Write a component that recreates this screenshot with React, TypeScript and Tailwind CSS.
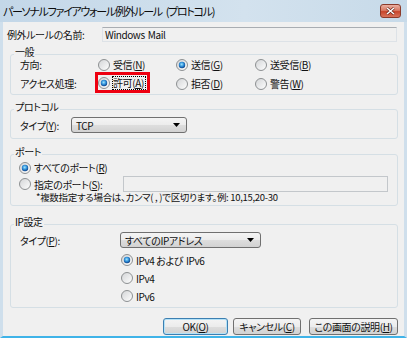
import { FC, ReactNode } from "react";

// Vista-style "Personal firewall exception rule" dialog

const Radio: FC<{ checked?: boolean }> = ({ checked }) => (
  <svg width="12" height="12" viewBox="0 0 12 12" className="shrink-0">
    <defs>
      <linearGradient id="rbg" x1="0" y1="0" x2="1" y2="1">
        <stop offset="0" stopColor="#d2d4d6" />
        <stop offset="1" stopColor="#ffffff" />
      </linearGradient>
      <radialGradient id="rdot" cx="0.45" cy="0.4" r="0.6">
        <stop offset="0" stopColor="#9fe6ff" />
        <stop offset="0.55" stopColor="#2f8fd8" />
        <stop offset="1" stopColor="#0b3f86" />
      </radialGradient>
    </defs>
    <circle cx="6" cy="6" r="5.5" fill="url(#rbg)" stroke="#8d9092" />
    {checked && <circle cx="6" cy="6" r="3.2" fill="url(#rdot)" />}
  </svg>
);

const Opt: FC<{ checked?: boolean; children: ReactNode; className?: string }> = ({
  checked,
  children,
  className = "",
}) => (
  <div className={`flex items-center gap-[3px] whitespace-nowrap ${className}`}>
    <Radio checked={checked} />
    <span>{children}</span>
  </div>
);

const Select: FC<{ value: string; className: string }> = ({ value, className }) => (
  <div
    className={`flex h-[16px] items-center justify-between rounded-[3px] border border-[#707070] bg-[linear-gradient(#f4f4f4,#ececec_50%,#dedede_50%,#d2d2d2)] pl-[4px] pr-[6px] ${className}`}
  >
    <span>{value}</span>
    <svg width="7" height="4" viewBox="0 0 7 4">
      <path d="M0 0h7L3.5 4z" fill="#000" />
    </svg>
  </div>
);

const Group: FC<{ label: string; className: string; children: ReactNode }> = ({
  label,
  className,
  children,
}) => (
  <div className={`relative ml-[7px] mr-[6px] rounded-[3px] border border-[#d5dfe5] ${className}`}>
    <span className="absolute -top-[8px] left-[3px] bg-[#f0f0f0] px-[1px] leading-[10px]">{label}</span>
    {children}
  </div>
);

const Btn: FC<{ children: ReactNode; className: string }> = ({ children, className }) => (
  <div
    className={`flex h-[17px] items-center justify-center whitespace-nowrap rounded-[3px] border bg-[linear-gradient(#f4f4f4,#ececec_50%,#dedede_50%,#d2d2d2)] ${className}`}
  >
    {children}
  </div>
);

export default function App() {
  return (
    <div className="flex h-[338px] w-[407px] flex-col overflow-hidden bg-[#f0f0f0] text-[10px] leading-[13px] tracking-[-0.4px] text-[#111] font-['Noto_Sans_CJK_JP',sans-serif] [font-feature-settings:'palt']">
      {/* Title bar */}
      <div className="flex h-[22px] shrink-0 items-center justify-between bg-[linear-gradient(90deg,#c3d7e8,#d3e2ee_60%,#c7dae9)] pl-[3px] pr-[6px]">
        <span className="text-[11px] tracking-[-1.3px] text-[#0b0b0b]">
          パーソナルファイアウォール例外ルール<span className="ml-[4px]">(プロトコル)</span>
        </span>
        <div className="flex h-[14px] w-[21px] items-center justify-center rounded-[3px] border border-[#8b3a2a] bg-[linear-gradient(#eab0a2,#d97a64_45%,#c8452b_55%,#d8745c)]">
          <svg width="9" height="8" viewBox="0 0 9 8">
            <path d="M1 1l7 6M8 1L1 7" stroke="#5a1a10" strokeWidth="2.6" />
            <path d="M1 1l7 6M8 1L1 7" stroke="#fff" strokeWidth="1.6" />
          </svg>
        </div>
      </div>

      {/* Body */}
      <div className="flex flex-1 flex-col border-x-[3px] border-b-[2px] border-x-[#cfdfec] border-b-[#3fb3e8]">
        <div className="mt-[5px] flex h-[15px] items-center pl-[4px]">
          <span className="w-[95px]">例外ルールの名前:</span>
          <div className="flex h-[15px] w-[295px] items-center border border-[#dde2e7] border-t-[#a9adb2] pl-[2px]">
            Windows<span className="ml-[3px]">Mail</span>
          </div>
        </div>

        <Group label="一般" className="mt-[12px] pb-[1px]">
          <div className="flex h-[19px] items-center pl-[9px]">
            <span className="w-[78px]">方向:</span>
            <Opt className="w-[78px]">
              受信(<u>N</u>)
            </Opt>
            <Opt checked className="w-[79px]">
              送信(<u>G</u>)
            </Opt>
            <Opt>
              送受信(<u>B</u>)
            </Opt>
          </div>
          <div className="flex h-[19px] items-center pl-[9px]">
            <span className="w-[78px]">アクセス処理:</span>
            <div className="w-[78px]">
              <div className="relative inline-flex items-center gap-[2px] whitespace-nowrap">
                <Radio checked />
                <span className="border border-dotted border-black pr-[1px] leading-[12px]">
                  許可(<u>A</u>)
                </span>
                <div className="absolute -bottom-[3px] -left-[3px] -right-[4px] -top-[4px] border-[3px] border-[#ee0010]" />
              </div>
            </div>
            <Opt className="w-[79px]">
              拒否(<u>D</u>)
            </Opt>
            <Opt>
              警告(<u>W</u>)
            </Opt>
          </div>
        </Group>

        <Group label="プロトコル" className="mt-[14px] pb-[2px] pt-[4px]">
          <div className="flex h-[22px] items-center pl-[9px]">
            <span className="w-[51px]">
              タイプ(<u>Y</u>):
            </span>
            <Select value="TCP" className="w-[116px]" />
          </div>
        </Group>

        <Group label="ポート" className="mt-[15px] pb-[2px] pt-[4px]">
          <div className="flex h-[17px] items-center pl-[8px]">
            <Opt checked>
              すべてのポート(<u>R</u>)
            </Opt>
          </div>
          <div className="flex h-[16px] items-center pl-[8px]">
            <Opt className="w-[104px]">
              指定のポート(<u>S</u>):
            </Opt>
            <div className="h-[16px] w-[265px] border border-[#c3c7cb] bg-[#f0f0f0]" />
          </div>
          <div className="flex h-[11px] items-center whitespace-nowrap pl-[25px] text-[9.5px] leading-[11px] tracking-[-0.3px]">
            *複数指定する場合は、カンマ( , )で区切ります。例: 10,15,20-30
          </div>
        </Group>

        <Group label="IP設定" className="mt-[18px] pb-[2px] pt-[7px]">
          <div className="flex h-[16px] items-center pl-[9px]">
            <span className="w-[100px]">
              タイプ(<u>P</u>):
            </span>
            <Select value="すべてのIPアドレス" className="w-[141px]" />
          </div>
          <div className="mt-[3px] flex flex-col pl-[110px]">
            <Opt checked className="h-[18px]">
              IPv4 および<span className="ml-[3px]">IPv6</span>
            </Opt>
            <Opt className="h-[18px]">IPv4</Opt>
            <Opt className="h-[18px]">IPv6</Opt>
          </div>
        </Group>

        <div className="mt-[10px] flex justify-end gap-[5px] pr-[6px]">
          <Btn className="w-[65px] border-[#3c7fb1] shadow-[inset_0_0_0_1px_#b4e2f8]">
            OK(<u>O</u>)
          </Btn>
          <Btn className="w-[68px] border-[#707070]">
            キャンセル(<u>C</u>)
          </Btn>
          <Btn className="ml-[3px] w-[89px] border-[#707070]">
            この画面の説明(<u>H</u>)
          </Btn>
        </div>
      </div>
    </div>
  );
}
